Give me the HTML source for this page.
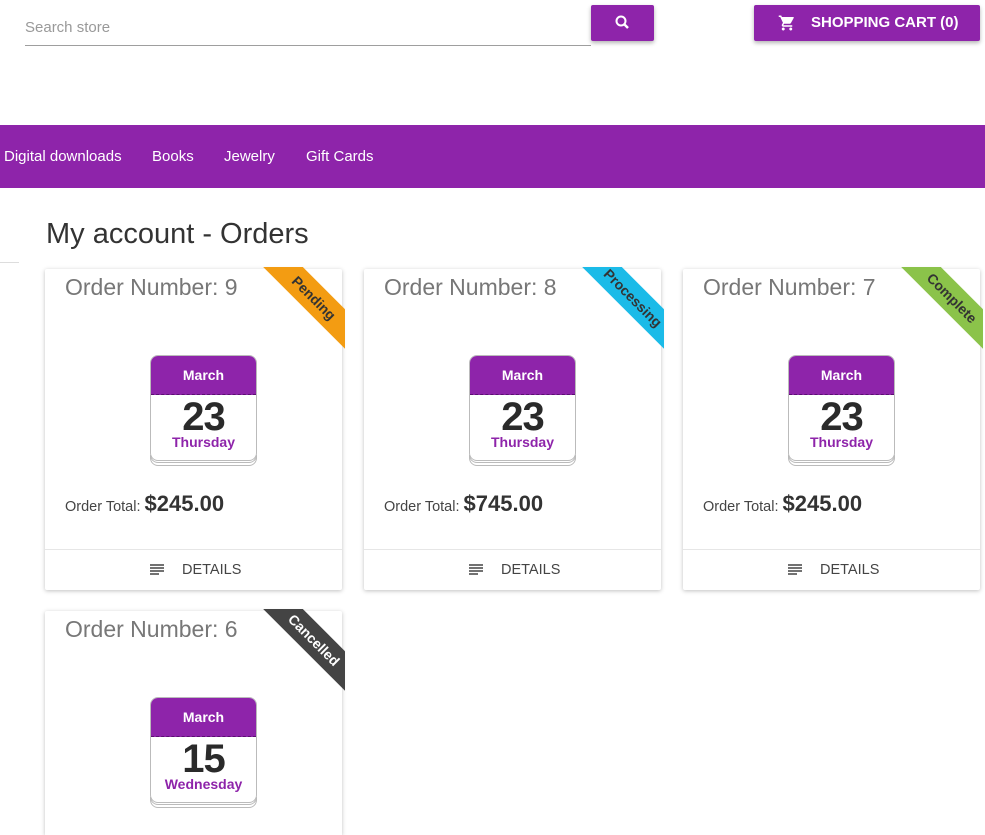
<!DOCTYPE html>
<html><head><meta charset="utf-8"><style>
*{box-sizing:border-box;margin:0;padding:0}
html,body{width:985px;height:835px;overflow:hidden}
body{background:#fff;font-family:"Liberation Sans",Arial,sans-serif;position:relative}
.abs{position:absolute}
.search{left:25px;top:14px;width:566px;height:32px;border-bottom:1px solid #9e9e9e;color:#999;font-size:15px;padding-top:5px}
.sbtn{left:591px;top:5px;width:63px;height:36px;background:#8e24aa;border-radius:2px;box-shadow:0 2px 4px rgba(0,0,0,.3)}
.cart{left:754px;top:5px;width:226px;height:36px;background:#8e24aa;border-radius:2px;box-shadow:0 2px 4px rgba(0,0,0,.3);color:#fff;font-size:15px;font-weight:bold;line-height:36px;padding-left:57px}
.nav{left:0;top:125px;width:985px;height:63px;background:#8e24aa;color:#fff;font-size:15px;line-height:63px}
.nav span{position:absolute;top:0}
h1{position:absolute;left:46px;top:218px;font-size:29px;font-weight:normal;color:#333}
.card{position:absolute;width:297px;height:321px;background:#fff;box-shadow:0 1px 4px rgba(0,0,0,.25);border-radius:2px}
.title{position:absolute;left:20px;top:5px;font-size:23px;color:#777;font-weight:300}
.cal{position:absolute;left:105px;top:86px;width:107px;height:111px}
.cal .pg{position:absolute;left:0;width:107px;border:1px solid #bbb;border-radius:0 0 8px 8px;background:#fff}
.cal .main{position:absolute;left:0;top:0;width:107px;height:106px;border:1px solid #bbb;border-radius:8px;background:#fff;overflow:hidden}
.cal .hd{height:39px;background:#8e24aa;color:#fff;font-weight:bold;font-size:14px;text-align:center;line-height:38px;border-bottom:1px dashed #5a1070}
.cal .num{text-align:center;font-size:40px;font-weight:bold;color:#2a2a2a;line-height:40px;margin-top:2px;letter-spacing:-1px}
.cal .day{text-align:center;font-size:14px;font-weight:bold;color:#8e24aa;line-height:14px;margin-top:-2px}
.total{position:absolute;left:20px;top:222px;color:#444;font-size:14.5px}
.total b{font-size:22px;font-weight:bold;color:#333}
.det{position:absolute;left:0;top:280px;width:297px;height:41px;border-top:1px solid #e6e6e6;font-size:14.5px;color:#444;line-height:40px}
.rib{position:absolute;left:217px;top:-2px;width:83px;height:83px;overflow:hidden}
.rib div{position:absolute;left:-28px;top:17px;width:160px;height:28px;transform:rotate(45deg);text-align:center;line-height:28px;font-size:14px;font-weight:bold;color:#333}
</style></head><body>
<div class="abs search">Search store</div>
<div class="abs sbtn"><svg width="63" height="36"><circle cx="30" cy="16" r="4.5" fill="none" stroke="#fff" stroke-width="2"/><line x1="33.5" y1="19.5" x2="37" y2="23" stroke="#fff" stroke-width="2.5"/></svg></div>
<div class="abs cart"><svg class="abs" style="left:23px;top:9px" width="20" height="18" viewBox="0 0 24 24"><path fill="#fff" d="M7 18c-1.1 0-2 .9-2 2s.9 2 2 2 2-.9 2-2-.9-2-2-2zM1 2v2h2l3.6 7.6-1.35 2.4c-.2.3-.25.6-.25 1 0 1.1.9 2 2 2h12v-2H7.4c-.1 0-.25-.1-.25-.25l.03-.12.9-1.63h7.45c.75 0 1.4-.4 1.7-1l3.6-6.5L21 4H5.2l-.9-2H1zm16 16c-1.1 0-2 .9-2 2s.9 2 2 2 2-.9 2-2-.9-2-2-2z"/></svg>SHOPPING CART (0)</div>
<div class="abs nav"><span style="left:4px">Digital downloads</span><span style="left:152px">Books</span><span style="left:224px">Jewelry</span><span style="left:306px">Gift Cards</span></div>
<h1>My account - Orders</h1>
<div class="abs" style="left:0;top:262px;width:19px;border-top:1px solid #ddd"></div>

<div class="card" style="left:45px;top:269px">
<div class="title">Order Number: 9</div>
<div class="rib"><div style="background:#f39c12">Pending</div></div>
<div class="cal"><div class="pg" style="top:100px;height:11px"></div><div class="pg" style="top:100px;height:8px"></div><div class="main"><div class="hd">March</div><div class="num">23</div><div class="day">Thursday</div></div></div>
<div class="total">Order Total: <b>$245.00</b></div>
<div class="det"><svg class="abs" style="left:105px;top:14px" width="14" height="12"><path d="M0 1h14M0 4h14M0 7h14M0 10h9" stroke="#444" stroke-width="1.6"/></svg><span class="abs" style="left:137px">DETAILS</span></div>
</div>

<div class="card" style="left:364px;top:269px">
<div class="title">Order Number: 8</div>
<div class="rib"><div style="background:#1bbbe8">Processing</div></div>
<div class="cal"><div class="pg" style="top:100px;height:11px"></div><div class="pg" style="top:100px;height:8px"></div><div class="main"><div class="hd">March</div><div class="num">23</div><div class="day">Thursday</div></div></div>
<div class="total">Order Total: <b>$745.00</b></div>
<div class="det"><svg class="abs" style="left:105px;top:14px" width="14" height="12"><path d="M0 1h14M0 4h14M0 7h14M0 10h9" stroke="#444" stroke-width="1.6"/></svg><span class="abs" style="left:137px">DETAILS</span></div>
</div>

<div class="card" style="left:683px;top:269px">
<div class="title">Order Number: 7</div>
<div class="rib"><div style="background:#8bc34a">Complete</div></div>
<div class="cal"><div class="pg" style="top:100px;height:11px"></div><div class="pg" style="top:100px;height:8px"></div><div class="main"><div class="hd">March</div><div class="num">23</div><div class="day">Thursday</div></div></div>
<div class="total">Order Total: <b>$245.00</b></div>
<div class="det"><svg class="abs" style="left:105px;top:14px" width="14" height="12"><path d="M0 1h14M0 4h14M0 7h14M0 10h9" stroke="#444" stroke-width="1.6"/></svg><span class="abs" style="left:137px">DETAILS</span></div>
</div>

<div class="card" style="left:45px;top:611px;height:224px;border-radius:2px 2px 0 0">
<div class="title">Order Number: 6</div>
<div class="rib"><div style="background:#444;color:#fff">Cancelled</div></div>
<div class="cal"><div class="pg" style="top:100px;height:11px"></div><div class="pg" style="top:100px;height:8px"></div><div class="main"><div class="hd">March</div><div class="num">15</div><div class="day">Wednesday</div></div></div>
</div>
</body></html>
